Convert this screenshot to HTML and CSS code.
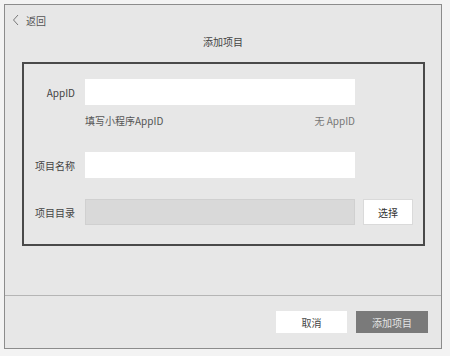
FILE: index.html
```html
<!DOCTYPE html>
<html lang="zh-CN">
<head>
    <meta charset="UTF-8">
    <meta name="viewport" content="width=device-width, initial-scale=1.0">
    <title>添加项目</title>
    <link rel="stylesheet" href="styles.css">
</head>
<body>
    <div class="frame">
        <div class="back">
            <svg class="back-icon" width="8" height="12" viewBox="0 0 8 12">
                <polyline points="6,1 1.5,6 6,11" fill="none" stroke="#777" stroke-width="1"/>
            </svg>
            <span>返回</span>
        </div>
        <div class="title">添加项目</div>

        <!-- 表单区域 -->
        <div class="form-box">
            <div class="row">
                <div class="label">AppID</div>
                <input class="input" type="text">
            </div>
            <div class="hint-row">
                <span class="hint">填写小程序AppID</span>
                <span class="hint-link">无 AppID</span>
            </div>
            <div class="row row-name">
                <div class="label">项目名称</div>
                <input class="input" type="text">
            </div>
            <div class="row row-dir">
                <div class="label">项目目录</div>
                <input class="input input-disabled" type="text" disabled>
                <button class="btn btn-pick">选择</button>
            </div>
        </div>

        <div class="footer">
            <button class="btn btn-cancel">取消</button>
            <button class="btn btn-primary">添加项目</button>
        </div>
    </div>
</body>
</html>
```

FILE: styles.css
```css
body {
    margin: 0;
    padding: 4px;
    background: #f3f3f3;
    font-family: "Noto Sans CJK SC", "Noto Sans", sans-serif;
    font-size: 10px;
    color: #444;
}

.frame {
    width: 436px;
    height: 343px;
    border: 1px solid #8c8c8c;
    background: #e7e7e7;
    display: flex;
    flex-direction: column;
}

.back {
    display: flex;
    align-items: center;
    gap: 6px;
    height: 16px;
    margin-top: 7px;
    padding-left: 7px;
    color: #555;
}

.title {
    height: 16px;
    line-height: 16px;
    margin-top: 6px;
    text-align: center;
    color: #444;
}

.form-box {
    margin: 12px 16px 0 17px;
    border: 2px solid #4a4a4a;
    height: 180px;
    padding-top: 15px;
    box-sizing: border-box;
    height: 184px;
}

.row {
    display: flex;
    align-items: center;
}

.label {
    width: 51px;
    margin-right: 10px;
    text-align: right;
    color: #444;
}

.input {
    width: 270px;
    height: 26px;
    box-sizing: border-box;
    border: none;
    background: #ffffff;
    padding: 0 8px;
    margin: 0;
}

.input-disabled {
    background: #d9d9d9;
    border: 1px solid #d0d0d0;
}

.hint-row {
    display: flex;
    justify-content: space-between;
    width: 270px;
    margin-left: 61px;
    height: 20px;
    line-height: 20px;
    margin-top: 6px;
}

.hint {
    color: #555;
}

.hint-link {
    color: #777;
}

.row-name {
    margin-top: 21px;
}

.row-dir {
    margin-top: 21px;
}

.btn {
    font-family: inherit;
    font-size: 10px;
    border: none;
    cursor: pointer;
    padding: 0;
}

.btn-pick {
    width: 50px;
    height: 26px;
    margin-left: 8px;
    background: #ffffff;
    border: 1px solid #dadada;
    color: #333;
}

.footer {
    margin-top: 49px;
    border-top: 1px solid #b5b5b5;
    display: flex;
    justify-content: flex-end;
    gap: 9px;
    padding: 15px 13px 0 0;
}

.btn-cancel {
    width: 71px;
    height: 22px;
    background: #ffffff;
    color: #444;
}

.btn-primary {
    width: 72px;
    height: 22px;
    background: #7a7a7a;
    color: #e4e4e4;
}
```
